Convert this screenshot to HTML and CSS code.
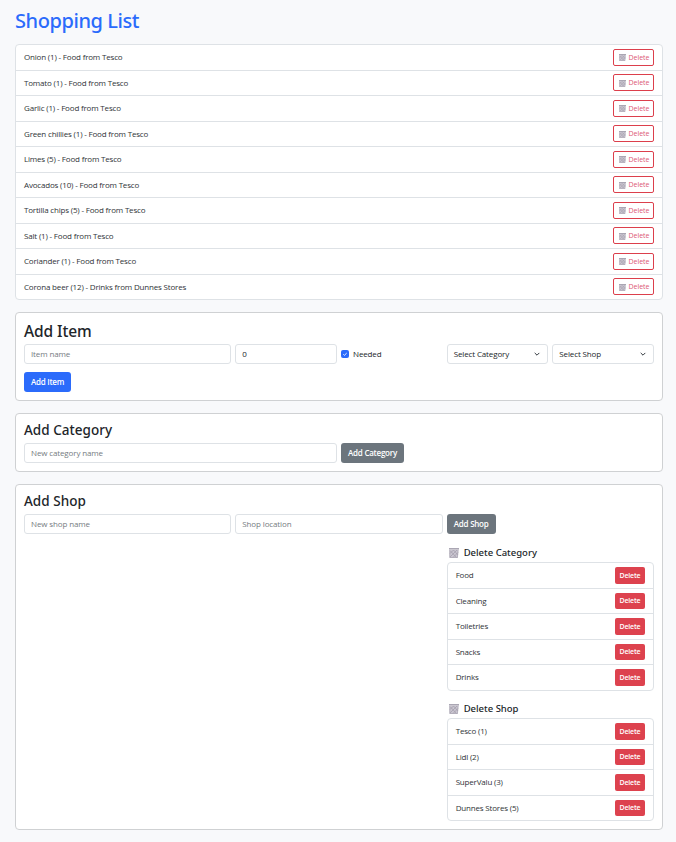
FILE: index.html
```html
<!DOCTYPE html>
<html lang="en">
<head>
<meta charset="utf-8">
<title>Shopping List</title>
<link rel="stylesheet" href="styles.css">
</head>
<body>
<svg class="defs" aria-hidden="true">
  <symbol id="bin" viewBox="0 0 10 10">
    <path d="M0 0h10v1.600H0z" fill="#aaa6b3"/>
    <path d="M.3 1.600h9.200L8.800 10H.5z" fill="#c9c5d0"/>
    <path d="M1 9l7-7M1 5.500L4.500 2M4 9.500l5-5M1.500 3l6 6.500M4.500 2l4.500 5" stroke="#a09ba9" stroke-width=".7" fill="none"/>
    <path d="M.8 2v7.500h8M9 2l-.5 7" stroke="#aaa6b3" stroke-width=".7" fill="none"/>
  </symbol>
</svg>
<main>
  <h1>Shopping List</h1>
  <ul class="list">
    <li><span>Onion (1) - Food from Tesco</span><button class="outline"><svg><use href="#bin"/></svg>Delete</button></li>
    <li><span>Tomato (1) - Food from Tesco</span><button class="outline"><svg><use href="#bin"/></svg>Delete</button></li>
    <li><span>Garlic (1) - Food from Tesco</span><button class="outline"><svg><use href="#bin"/></svg>Delete</button></li>
    <li><span>Green chillies (1) - Food from Tesco</span><button class="outline"><svg><use href="#bin"/></svg>Delete</button></li>
    <li><span>Limes (5) - Food from Tesco</span><button class="outline"><svg><use href="#bin"/></svg>Delete</button></li>
    <li><span>Avocados (10) - Food from Tesco</span><button class="outline"><svg><use href="#bin"/></svg>Delete</button></li>
    <li><span>Tortilla chips (5) - Food from Tesco</span><button class="outline"><svg><use href="#bin"/></svg>Delete</button></li>
    <li><span>Salt (1) - Food from Tesco</span><button class="outline"><svg><use href="#bin"/></svg>Delete</button></li>
    <li><span>Coriander (1) - Food from Tesco</span><button class="outline"><svg><use href="#bin"/></svg>Delete</button></li>
    <li><span>Corona beer (12) - Drinks from Dunnes Stores</span><button class="outline"><svg><use href="#bin"/></svg>Delete</button></li>
  </ul>

  <section class="card item-card">
    <h2>Add Item</h2>
    <form class="row">
      <input class="field c4" placeholder="Item name">
      <input class="field c2" value="0">
      <label class="check c2"><span class="box"><svg viewBox="0 0 8 8"><path d="M2.300 4.300l1.100 1 2.300-2.200"/></svg></span>Needed</label>
      <div class="field select c2"><span>Select Category</span><svg viewBox="0 0 8 8"><path d="M1.700 2.900L4 5.200l2.300-2.300"/></svg></div>
      <div class="field select c2"><span>Select Shop</span><svg viewBox="0 0 8 8"><path d="M1.700 2.900L4 5.200l2.300-2.300"/></svg></div>
    </form>
    <button class="btn primary">Add Item</button>
  </section>

  <section class="card category-card">
    <h3>Add Category</h3>
    <form class="row">
      <input class="field c6" placeholder="New category name">
      <button class="btn secondary c4">Add Category</button>
    </form>
  </section>

  <section class="card shop-card">
    <h3>Add Shop</h3>
    <div class="row">
      <input class="field c4" placeholder="New shop name">
      <input class="field c4" placeholder="Shop location">
      <div class="c4">
        <button class="btn secondary">Add Shop</button>
        <h4><svg><use href="#bin"/></svg>Delete Category</h4>
        <ul class="list">
          <li><span>Food</span><button class="danger">Delete</button></li>
          <li><span>Cleaning</span><button class="danger">Delete</button></li>
          <li><span>Toiletries</span><button class="danger">Delete</button></li>
          <li><span>Snacks</span><button class="danger">Delete</button></li>
          <li><span>Drinks</span><button class="danger">Delete</button></li>
        </ul>
        <h4><svg><use href="#bin"/></svg>Delete Shop</h4>
        <ul class="list">
          <li><span>Tesco (1)</span><button class="danger">Delete</button></li>
          <li><span>Lidl (2)</span><button class="danger">Delete</button></li>
          <li><span>SuperValu (3)</span><button class="danger">Delete</button></li>
          <li><span>Dunnes Stores (5)</span><button class="danger">Delete</button></li>
        </ul>
      </div>
    </div>
  </section>
</main>
</body>
</html>
```
FILE: styles.css
```css
* { box-sizing: border-box; }
body {
  margin: 0;
  background: #f8f9fb;
  color: #212529;
  font: 8px/12px "Open Sans", "Noto Sans", sans-serif;
  letter-spacing: -.13px;
}
.defs { position: absolute; width: 0; height: 0; }
main { padding: 8px 13px 0 15px; }
h1, h2, h3, h4 { margin: 0; font-weight: 500; font-family: "Noto Sans", sans-serif; letter-spacing: 0; }
h1 { font-size: 20px; line-height: 26px; height: 36px; color: #2b6bfb; letter-spacing: -.42px; }
h2 { font-size: 15.5px; line-height: 20px; height: 23px; letter-spacing: -.1px; }
h3 { font-size: 13.5px; line-height: 18px; height: 22px; letter-spacing: .03px; }
h4 {
  display: flex;
  align-items: center;
  gap: 5px;
  height: 14px;
  margin: 11.5px 0 2.5px 2px;
  font-size: 9.5px;
  line-height: 14px;
}
.list + h4 { margin-top: 11px; }
h4 svg { width: 10px; height: 10px; }
button, input { font: inherit; letter-spacing: inherit; }

.list {
  list-style: none;
  margin: 0;
  padding: 0;
  background: #fff;
  border: 1px solid #dee2e6;
  border-radius: 4px;
}
.list li {
  display: flex;
  align-items: center;
  justify-content: space-between;
  height: 25.5px;
  padding: 0 8px;
  border-bottom: 1px solid #dee2e6;
}
.list li:last-child { border-bottom: 0; height: 24.5px; }
.list span { letter-spacing: -.18px; color: #2f3337; }
.outline, .danger {
  display: flex;
  align-items: center;
  justify-content: center;
  height: 17px;
  padding: 1px 0 0;
  border-radius: 2px;
  font-size: 7px;
  line-height: 10px;
  letter-spacing: -.05px;
}
.outline { width: 41px; gap: 3px; padding-left: 1px; border: 1px solid #dc3f4c; background: #fff; color: #dc5876; }
.outline svg { width: 7px; height: 7px; }
.danger { width: 30px; height: 16.5px; border: 0; background: #dd424e; color: #fff; font-weight: 600; letter-spacing: -.2px; }

.card {
  padding: 8px;
  margin-top: 12px;
  background: #fff;
  border: 1px solid #cfd1d3;
  border-radius: 4px;
}
.item-card { height: 89px; }
.category-card { height: 59px; padding-top: 7px; }
.shop-card { height: 346px; padding-top: 7px; }
.row { display: grid; grid-template-columns: repeat(12, minmax(0, 1fr)); column-gap: 4px; align-items: start; }
.c2 { grid-column: span 2; }
.c4 { grid-column: span 4; }
.c6 { grid-column: span 6; }
.field {
  width: 100%;
  height: 20px;
  padding: 0 6px;
  border: 1px solid #dee2e6;
  border-radius: 3px;
  background: #fff;
  color: #212529;
}
input.field { padding-bottom: 1px; }
.field::placeholder { color: #757b81; opacity: 1; }
.select { display: flex; align-items: center; justify-content: space-between; }
.select svg { width: 8px; height: 8px; fill: none; stroke: #343a40; stroke-width: 1; }
.check { display: flex; align-items: center; gap: 4px; height: 20px; }
.box { width: 8px; height: 8px; border-radius: 2px; background: #2b6bfb; }
.box svg { display: block; fill: none; stroke: #fff; stroke-width: .9; }
.btn {
  display: block;
  height: 20px;
  padding: 0 4px;
  border: 0;
  border-radius: 3px;
  color: #fff;
  justify-self: start;
  font-weight: 600;
  letter-spacing: -.25px;
  white-space: nowrap;
}
.primary { width: 47px; margin-top: 8px; background: #2b6bfb; }
.secondary { background: #6c757d; }
.category-card .btn { width: 63px; }
.shop-card .btn { width: 49px; }
```
